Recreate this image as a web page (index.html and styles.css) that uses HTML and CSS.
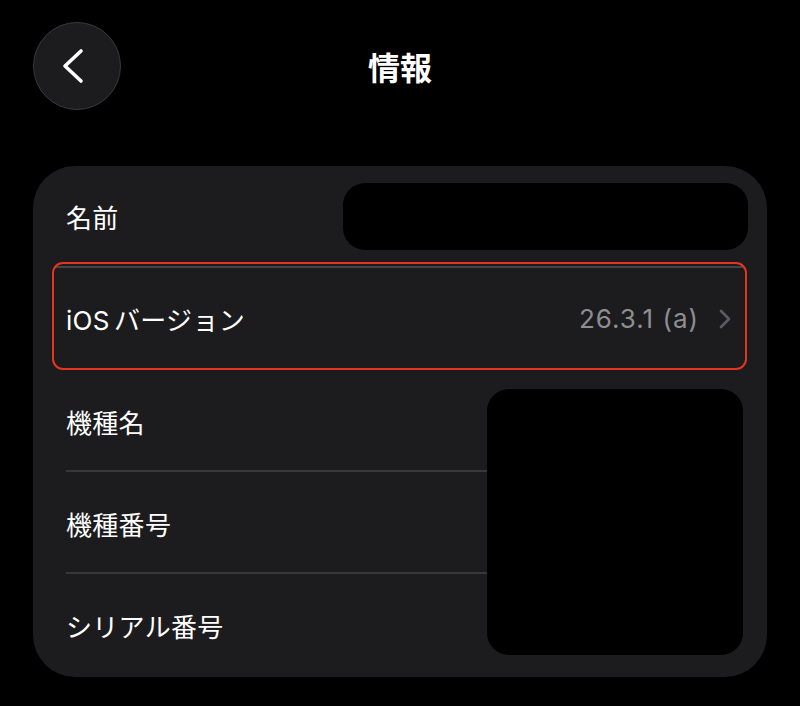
FILE: index.html
```
<!DOCTYPE html>
<html lang="ja">
<head>
<meta charset="utf-8">
<link rel="stylesheet" href="styles.css">
</head>
<body>
<header class="nav">
  <button class="back" aria-label="戻る">
    <svg width="36" height="36" viewBox="0 0 36 36"><path d="M24 3 L8 18 L24 33" fill="none" stroke="#fff" stroke-width="3.6" stroke-linecap="round" stroke-linejoin="round"/></svg>
  </button>
  <h1 class="title">情報</h1>
  <span></span>
</header>
<section class="card">
  <div class="row"><span class="label">名前</span></div>
  <div class="row"><span class="label">iOS<span class="thin"> </span>バージョン</span><span class="value">26.3.1 (a)</span>
    <svg class="chev" width="12" height="20" viewBox="0 0 12 20"><path d="M2 2 L10 10 L2 18" fill="none" stroke="#5b5b60" stroke-width="2.6" stroke-linecap="round" stroke-linejoin="round"/></svg>
  </div>
  <div class="row sep"><span class="label">機種名</span></div>
  <div class="row sep"><span class="label">機種番号</span></div>
  <div class="row"><span class="label">シリアル番号</span></div>
  <div class="redact redact-name"></div>
  <div class="redact redact-device"></div>
  <div class="highlight"></div>
</section>
</body>
</html>
```
FILE: styles.css
```
html, body {
  margin: 0;
  padding: 0;
  background: #000;
}
body {
  width: 800px;
  height: 706px;
  overflow: hidden;
  font-family: Inter, "Noto Sans CJK JP", sans-serif;
  color: #fff;
}
.nav {
  display: grid;
  grid-template-columns: 88px 1fr 88px;
  align-items: center;
  padding: 22px 33px 0;
  height: 88px;
}
.back {
  width: 88px;
  height: 88px;
  border-radius: 50%;
  background: #1c1c1e;
  border: 1.5px solid #3a3a3c;
  display: flex;
  align-items: center;
  justify-content: center;
  padding: 0 4px 0 0;
  margin: 0;
}
.title {
  margin: 0;
  text-align: center;
  font-family: "Noto Sans CJK JP", sans-serif;
  font-weight: 700;
  font-size: 32px;
  line-height: 1;
}
.card {
  position: relative;
  margin: 56px 33px 0;
  background: #1c1c1e;
  border-radius: 42px;
  height: 511px;
}
.row {
  height: 102px;
  display: flex;
  align-items: center;
  padding: 0 36px 0 33px;
  position: relative;
}
.row:nth-child(1) { height: 101px; }
.row:nth-child(2) { height: 103px; }
.sep::after {
  content: "";
  position: absolute;
  left: 33px;
  right: 40px;
  bottom: 0;
  height: 2px;
  background: #38383a;
}
.row:nth-child(1)::after {
  content: "";
  position: absolute;
  left: 22px;
  right: 24px;
  bottom: -1px;
  height: 2px;
  background: #444446;
}
.label {
  font-size: 26px;
  letter-spacing: 0.3px;
  flex: 1;
}
.thin {
  font-size: 14px;
}
.value {
  font-size: 26px;
  letter-spacing: 1px;
  color: #8e8e93;
  margin-right: 20px;
}
.chev {
  display: block;
}
.redact {
  position: absolute;
  background: #000;
}
.redact-name {
  left: 310px;
  top: 17px;
  width: 405px;
  height: 67px;
  border-radius: 22px;
}
.redact-device {
  left: 454px;
  top: 223px;
  width: 256px;
  height: 266px;
  border-radius: 22px;
}
.highlight {
  position: absolute;
  left: 19px;
  top: 96px;
  width: 691px;
  height: 104px;
  border: 2px solid #e3351f;
  border-radius: 11px;
}
```
